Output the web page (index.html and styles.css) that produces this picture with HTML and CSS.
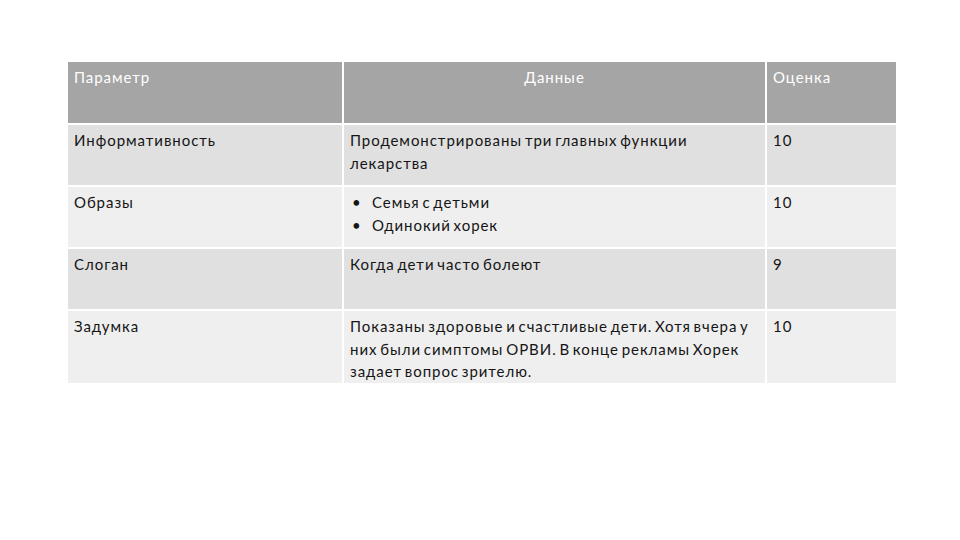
FILE: index.html
```html
<!DOCTYPE html>
<html lang="ru">
<head>
<meta charset="utf-8">
<link rel="stylesheet" href="styles.css">
</head>
<body>
<div class="slide">
  <table class="grid">
    <colgroup>
      <col class="c1"><col class="c2"><col class="c3">
    </colgroup>
    <thead>
      <tr class="head">
        <th>Параметр</th>
        <th class="center">Данные</th>
        <th>Оценка</th>
      </tr>
    </thead>
    <tbody>
      <tr class="dark">
        <td>Информативность</td>
        <td>Продемонстрированы три главных функции лекарства</td>
        <td>10</td>
      </tr>
      <tr class="light">
        <td>Образы</td>
        <td>
          <ul class="bullets">
            <li>Семья с детьми</li>
            <li>Одинокий хорек</li>
          </ul>
        </td>
        <td>10</td>
      </tr>
      <tr class="dark">
        <td>Слоган</td>
        <td>Когда дети часто болеют</td>
        <td>9</td>
      </tr>
      <tr class="light last">
        <td>Задумка</td>
        <td>Показаны здоровые и счастливые дети. Хотя вчера у них были симптомы ОРВИ. В конце рекламы Хорек задает вопрос зрителю.</td>
        <td>10</td>
      </tr>
    </tbody>
  </table>
</div>
</body>
</html>
```

FILE: styles.css
```css
html, body {
  margin: 0;
  padding: 0;
  background: #ffffff;
}
.slide {
  width: 960px;
  height: 540px;
  padding: 62px 0 0 68px;
  box-sizing: border-box;
  font-family: "Lato", "Open Sans", "Liberation Sans", sans-serif;
  font-size: 15px;
  line-height: 22.5px;
  letter-spacing: 0.95px;
  word-spacing: -2px;
  color: #151515;
}
.grid {
  border-collapse: collapse;
  width: 828px;
  table-layout: fixed;
}
.c1 { width: 275px; }
.c2 { width: 423px; }
.c3 { width: 130px; }
.grid th, .grid td {
  border: 2px solid #ffffff;
  padding: 4px 6px 0 6px;
  vertical-align: top;
  text-align: left;
  font-weight: normal;
}
.grid tr { height: 62px; }
.grid tr.last { height: 71px; }
.grid tr:first-child th { border-top: 0; }
.grid th:first-child, .grid td:first-child { border-left: 0; }
.grid th:last-child, .grid td:last-child { border-right: 0; }
.grid tr.last td { border-bottom: 0; }
.head th {
  background: #a5a5a5;
  color: #ffffff;
}
.head th.center { text-align: center; }
.dark td { background: #e0e0e0; }
.light td { background: #efefef; }
.bullets {
  list-style: none;
  margin: 0;
  padding: 0;
}
.bullets li {
  position: relative;
  padding-left: 22px;
}
.bullets li::before {
  content: "•";
  position: absolute;
  left: 2px;
  top: 0;
}
```
